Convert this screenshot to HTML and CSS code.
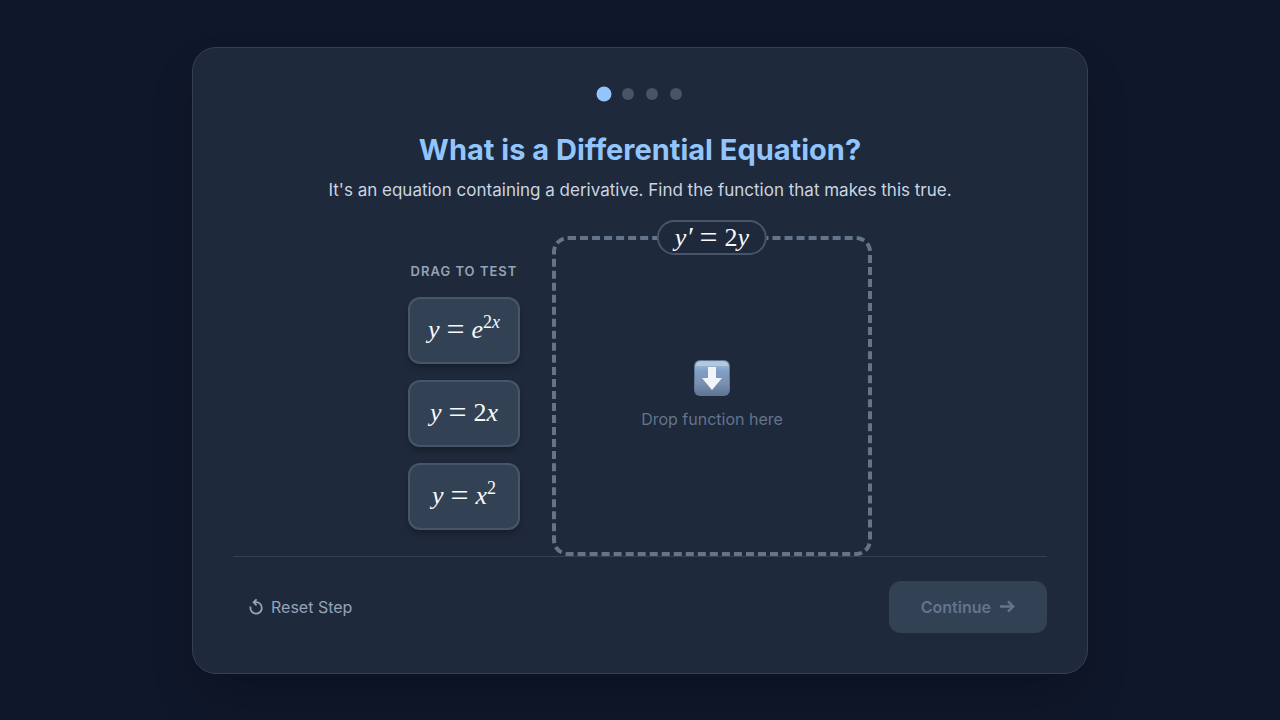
FILE: index.html
```html
<!DOCTYPE html>
<html lang="en">
<head>
  <meta charset="UTF-8">
  <meta name="viewport" content="width=device-width, initial-scale=1.0">
  <title>What is a Differential Equation?</title>
  <link rel="stylesheet" href="styles.css">
</head>
<body>
  <main class="card">
    <div class="steps">
      <span class="dot active"></span>
      <span class="dot"></span>
      <span class="dot"></span>
      <span class="dot"></span>
    </div>

    <header class="intro">
      <h1>What is a Differential Equation?</h1>
      <p>It's an equation containing a derivative. Find the function that makes this true.</p>
    </header>

    <section class="workspace">
      <div class="functions">
        <h2>Drag to test</h2>
        <button class="function math" draggable="true"><i>y</i><span class="eq">=</span><i>e</i><sup>2<i>x</i></sup></button>
        <button class="function math" draggable="true"><i>y</i><span class="eq">=</span>2<i>x</i></button>
        <button class="function math" draggable="true"><i>y</i><span class="eq">=</span><i>x</i><sup>2</sup></button>
      </div>

      <div class="drop-zone">
        <div class="equation math"><i>y</i><i class="prime">′</i><span class="eq">=</span>2<i>y</i></div>
        <svg class="drop-icon" width="36" height="36" viewBox="0 0 36 36" aria-hidden="true">
          <defs>
            <linearGradient id="key" x1="0" y1="0" x2="0" y2="1">
              <stop offset="0" stop-color="#a9c3dd"/>
              <stop offset="0.3" stop-color="#7f9fc6"/>
              <stop offset="0.65" stop-color="#7a91b2"/>
              <stop offset="1" stop-color="#607594"/>
            </linearGradient>
          </defs>
          <rect width="36" height="36" rx="6" fill="#5f7897"/>
          <rect x="1" y="1" width="34" height="34" rx="5" fill="url(#key)"/>
          <path d="M5 2h26q3 0 3 4H2q0-4 3-4z" fill="#b4c9de"/>
          <path d="M14 7h8v11h6L18 30 8 18h6z" fill="#f1f5f9"/>
        </svg>
        <p>Drop function here</p>
      </div>
    </section>

    <footer class="actions">
      <button class="reset">
        <svg width="14" height="16" viewBox="0 0 14 16" fill="none" stroke="currentColor" stroke-width="1.8" aria-hidden="true">
          <path d="M1.4 7.5v1.2a5.7 5.7 0 1 0 5.7-5.5H4.5M7.6.3 4.6 3.2l3 3.2"/>
        </svg>
        Reset Step
      </button>
      <button class="continue" disabled>
        Continue
        <svg width="16" height="16" viewBox="0 0 16 16" fill="none" stroke="currentColor" stroke-width="2.4" aria-hidden="true">
          <path d="M1 7.5h13M9 2.3l5.2 5.2L9 12.7"/>
        </svg>
      </button>
    </footer>
  </main>
</body>
</html>
```

FILE: styles.css
```css
* {
  box-sizing: border-box;
}

body {
  margin: 0;
  min-height: 100vh;
  padding: 16px;
  display: flex;
  align-items: center;
  justify-content: center;
  background: #0f172a;
  color: #f1f5f9;
  font-family: Inter, sans-serif;
  font-size: 16px;
  line-height: 24px;
}

h1, h2, p {
  margin: 0;
}

button {
  font: inherit;
  color: inherit;
  border: none;
  background: none;
  cursor: pointer;
}

.card {
  width: 100%;
  max-width: 896px;
  padding: 40px;
  background: #1e293b;
  border: 1px solid #334155;
  border-radius: 24px;
  box-shadow: 0 25px 50px -12px rgba(0, 0, 0, 0.25);
}

.steps {
  display: flex;
  justify-content: center;
  gap: 12px;
  margin-bottom: 32px;
}

.dot {
  width: 12px;
  height: 12px;
  border-radius: 50%;
  background: #475569;
}

.dot.active {
  background: #93c5fd;
  transform: scale(1.25);
}

.intro {
  text-align: center;
  margin-bottom: 32px;
}

.intro h1 {
  margin-bottom: 8px;
  font-size: 29px;
  line-height: 36px;
  font-weight: 700;
  color: #93c5fd;
}

.intro p {
  font-size: 17px;
  line-height: 28px;
  color: #cbd5e1;
}

.workspace {
  display: flex;
  align-items: center;
  justify-content: center;
  gap: 32px;
}

.functions {
  width: 112px;
  display: flex;
  flex-direction: column;
  gap: 16px;
}

.functions h2 {
  font-size: 13px;
  line-height: 20px;
  font-weight: 600;
  letter-spacing: 1px;
  text-align: center;
  text-transform: uppercase;
  white-space: nowrap;
  color: #94a3b8;
}

.math {
  font-family: "Liberation Serif", serif;
  font-size: 26px;
  line-height: 31px;
  color: #f8fafc;
  white-space: nowrap;
}

.math sup {
  font-size: 18px;
  line-height: 0;
}

.eq {
  margin: 0 7px;
  font-size: 32px;
  line-height: 0;
  vertical-align: -2px;
}

.prime {
  font-size: 28px;
  line-height: 0;
}

.function {
  padding: 15px 0 17px;
  background: #334155;
  border: 2px solid #475569;
  border-radius: 12px;
  box-shadow: 0 4px 6px -1px rgba(0, 0, 0, 0.3);
  cursor: grab;
}

.drop-zone {
  position: relative;
  width: 320px;
  height: 320px;
  display: flex;
  flex-direction: column;
  align-items: center;
  justify-content: center;
  border: 4px dashed #64748b;
  border-radius: 16px;
  color: #64748b;
}

.drop-icon {
  margin-bottom: 11px;
}

/* sits over the top edge of the drop zone */
.equation {
  position: absolute;
  top: -20px;
  left: 50%;
  transform: translateX(-50%);
  padding: 0 16px;
  background: #1e293b;
  border: 2px solid #475569;
  border-radius: 18px;
}

.actions {
  display: flex;
  align-items: center;
  justify-content: space-between;
  padding-top: 24px;
  border-top: 1px solid #334155;
}

.reset,
.continue {
  display: flex;
  align-items: center;
  gap: 8px;
}

.reset {
  padding: 8px 16px;
  color: #94a3b8;
}

.continue {
  padding: 14px 32px;
  border-radius: 12px;
  font-weight: 600;
  background: #334155;
  color: #64748b;
  cursor: not-allowed;
}
```
